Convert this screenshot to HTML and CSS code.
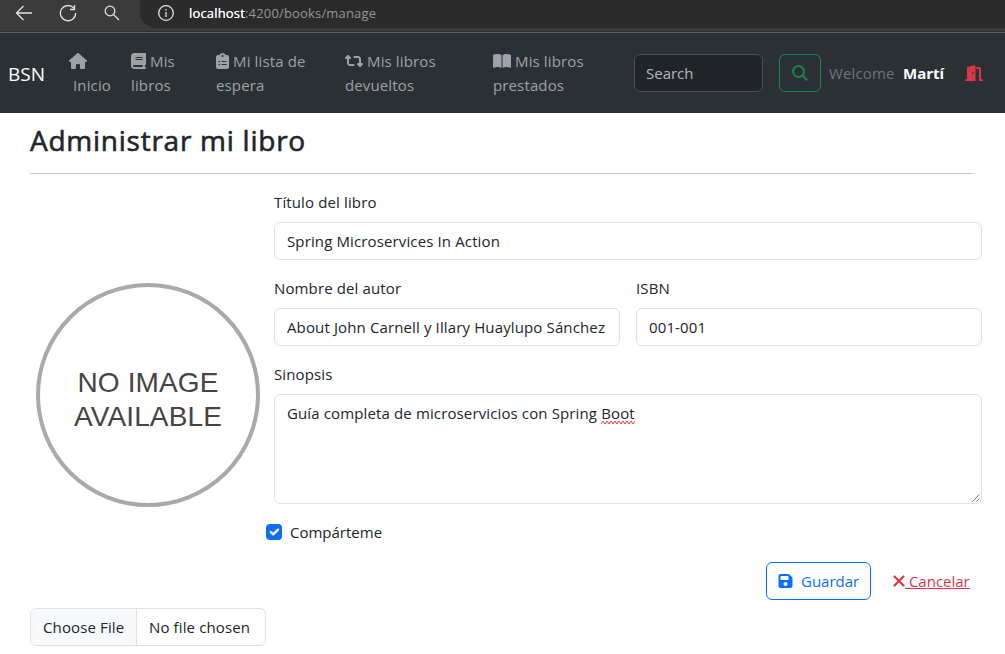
FILE: index.html
```html
<!DOCTYPE html>
<html lang="es">
<head>
<meta charset="utf-8">
<title>BSN</title>
<link rel="stylesheet" href="styles.css">
</head>
<body>
<div class="browser">
  <svg class="back" width="18" height="16" viewBox="0 0 18 16"><path d="M17 8H1.5M8.5 1L1.5 8l7 7"/></svg>
  <svg class="reload" width="18" height="18" viewBox="0 0 18 18"><path d="M14.8 4.2A7.6 7.6 0 1 0 16.6 9M15.5 1v4.5H11"/></svg>
  <svg class="find" width="16" height="16" viewBox="0 0 16 16"><circle cx="6" cy="6" r="4.8"/><path d="M9.6 9.6L15 15"/></svg>
  <div class="address">
    <svg class="info" width="16" height="16" viewBox="0 0 16 16"><circle cx="8" cy="8" r="7.3"/><path d="M8 7v5M8 4v1.4"/></svg>
    <span class="url"><span class="host">localhost</span>:4200/books/manage</span>
  </div>
</div>
<nav class="navbar">
  <a class="brand">BSN</a>
  <a class="link home"><svg class="fa" width="18" height="16" viewBox="0 0 576 512"><path d="M575.8 255.5c0 18-15 32.1-32 32.1h-32l.7 160.2c0 2.7-.2 5.4-.5 8.1V472c0 22.100-17.900 40-40 40H392c-22.100 0-40-17.900-40-40v-88c0-17.700-14.300-32-32-32h-64c-17.700 0-32 14.300-32 32v88c0 22.100-17.900 40-40 40h-80c-22.100 0-40-17.900-40-40V287.600H32c-18 0-32-14-32-32.100 0-9 3-17 10-24L266.400 8c7-7 15-8 22-8s15 2 21 7l255.400 224.500c8 7 12 15 11 24z"/></svg><br><span class="inicio">Inicio</span></a>
  <a class="link books"><svg class="fa" width="15" height="16" viewBox="0 0 448 512" preserveAspectRatio="none"><path d="M96 0C43 0 0 43 0 96v320c0 53 43 96 96 96h320c17.700 0 32-14.300 32-32s-14.300-32-32-32v-64c17.700 0 32-14.300 32-32V32c0-17.700-14.300-32-32-32H96zm0 384h256v64H96c-17.700 0-32-14.300-32-32s14.300-32 32-32zm32-240c0-8.800 7.200-16 16-16h192c8.800 0 16 7.200 16 16s-7.200 16-16 16H144c-8.800 0-16-7.200-16-16zm16 48h192c8.800 0 16 7.200 16 16s-7.200 16-16 16H144c-8.800 0-16-7.200-16-16s7.200-16 16-16z"/></svg> Mis<br>libros</a>
  <a class="link waiting"><svg class="fa" width="13" height="16" viewBox="0 0 384 512" preserveAspectRatio="none"><path d="M192 0c-41.800 0-77.400 26.700-90.500 64H64C28.700 64 0 92.700 0 128v320c0 35.300 28.700 64 64 64h256c35.300 0 64-28.700 64-64V128c0-35.300-28.700-64-64-64h-37.500C269.400 26.700 233.800 0 192 0zm0 64a32 32 0 1 1 0 64 32 32 0 1 1 0-64zM72 272a24 24 0 1 1 48 0 24 24 0 1 1-48 0zm104-16h128c8.800 0 16 7.200 16 16s-7.200 16-16 16H176c-8.800 0-16-7.200-16-16s7.200-16 16-16zM72 368a24 24 0 1 1 48 0 24 24 0 1 1-48 0zm88 0c0-8.800 7.200-16 16-16h128c8.800 0 16 7.200 16 16s-7.200 16-16 16H176c-8.800 0-16-7.200-16-16z"/></svg> Mi lista de<br>espera</a>
  <a class="link returned"><svg class="fa" width="18" height="16" viewBox="0 0 576 512"><path d="M272 416c17.700 0 32-14.300 32-32s-14.300-32-32-32H160c-17.700 0-32-14.300-32-32V192h32c12.900 0 24.600-7.800 29.600-19.800s2.200-25.700-6.900-34.900l-64-64c-12.500-12.500-32.800-12.500-45.300 0l-64 64c-9.200 9.200-11.900 22.900-6.900 34.900S19.100 192 32 192h32v128c0 53 43 96 96 96h112zM304 96c-17.700 0-32 14.300-32 32s14.300 32 32 32h112c17.700 0 32 14.300 32 32v128h-32c-12.900 0-24.600 7.800-29.600 19.800s-2.200 25.700 6.900 34.900l64 64c12.500 12.500 32.800 12.500 45.300 0l64-64c9.200-9.200 11.900-22.900 6.900-34.900S556.900 320 544 320h-32V192c0-53-43-96-96-96H304z"/></svg> Mis libros<br>devueltos</a>
  <a class="link lent"><svg class="fa" width="18" height="16" viewBox="0 0 576 512"><path d="M249.600 471.500c10.800 3.800 22.400-4.100 22.400-15.500V78.600c0-4.200-1.600-8.400-5-11C247.400 52 202.400 32 144 32 93.500 32 46.300 45.300 18.100 56.100 6.800 60.500 0 71.700 0 83.800v370.300c0 11.900 12.800 20.200 24.100 16.500C55.600 460.100 105.500 448 144 448c33.900 0 79 14 105.600 23.500zm76.800 0C353 462 398.100 448 432 448c38.500 0 88.400 12.100 119.900 22.600 11.300 3.800 24.100-4.600 24.100-16.500V83.800c0-12.100-6.800-23.300-18.100-27.600C529.700 45.300 482.500 32 432 32c-58.400 0-103.400 20-123 35.600-3.300 2.600-5 6.800-5 11V456c0 11.400 11.700 19.300 22.400 15.500z"/></svg> Mis libros<br>prestados</a>
  <div class="search">Search</div>
  <div class="go"><svg width="16" height="16" viewBox="0 0 16 16"><circle cx="6.500" cy="6.500" r="5.500"/><path d="M10.500 10.500L15.300 15.300"/></svg></div>
  <span class="welcome">Welcome</span>
  <span class="user">Martí</span>
  <svg class="door" width="18" height="16" viewBox="0 0 18 16"><path d="M2 2.200L9.200.2Q10.500 0 10.500 1.200V16H.8Q0 16 0 15.200T.8 14.300H2zM7.700 7a.7 1 0 1 0 0 2 .7 1 0 1 0 0-2zM11.200 2h3q1.800 0 1.800 1.800v10.500h1.200q.8 0 .8.900t-.8.800H14V4h-2.800z"/></svg>
</nav>
<main class="page">
  <h1 class="title">Administrar mi libro</h1>
  <div class="content">
    <div class="picture"><div class="circle"><span>NO IMAGE</span><span>AVAILABLE</span></div></div>
    <form class="form">
      <label class="label">Título del libro</label>
      <div class="field">Spring Microservices In Action</div>
      <div class="row">
        <div class="col"><label class="label">Nombre del autor</label><div class="field">About John Carnell y Illary Huaylupo Sánchez</div></div>
        <div class="col"><label class="label">ISBN</label><div class="field">001-001</div></div>
      </div>
      <label class="label">Sinopsis</label>
      <div class="field area">Guía completa de microservicios con Spring <span class="typo">Boot<svg class="wave" width="34" height="5" viewBox="0 0 34 5"><path d="M0 4l2-3 2 3 2-3 2 3 2-3 2 3 2-3 2 3 2-3 2 3 2-3 2 3 2-3 2 3 2-3 2 3 2-3"/></svg></span><svg class="grip" width="8" height="8" viewBox="0 0 8 8"><path d="M.5 7.500l7-7M4.500 7.500l3-3"/></svg></div>
      <div class="check"><span class="box"><svg width="16" height="16" viewBox="0 0 20 20"><path d="M6 10l3 3 6-6"/></svg></span><span class="plain">Compárteme</span></div>
      <div class="actions">
        <a class="save"><svg width="15" height="16" viewBox="0 0 448 512"><path d="M64 32C28.700 32 0 60.700 0 96v320c0 35.300 28.700 64 64 64h320c35.300 0 64-28.700 64-64V173.300c0-17-6.700-33.300-18.700-45.300L352 50.700c-12-12-28.300-18.700-45.300-18.700H64zm0 96c0-17.700 14.300-32 32-32h192c17.700 0 32 14.300 32 32v64c0 17.700-14.300 32-32 32H96c-17.700 0-32-14.300-32-32v-64zm160 160a64 64 0 1 1 0 128 64 64 0 1 1 0-128z"/></svg><span class="plain">Guardar</span></a>
        <a class="cancel"><svg width="12" height="12" viewBox="0 0 12 12"><path d="M1.500 1.500l9 9m0-9l-9 9"/></svg><span class="plain">&nbsp;Cancelar</span></a>
      </div>
    </form>
  </div>
  <div class="file"><span class="choose">Choose File</span><span class="chosen">No file chosen</span></div>
</main>
</body>
</html>
```
FILE: styles.css
```css
* { box-sizing: border-box; }
body { margin: 0; width: 1005px; height: 654px; overflow: hidden; background: #fff; color: #212529; font: 15px/24px "Open Sans", "Noto Sans", sans-serif; letter-spacing: .13px; white-space: nowrap; }
svg { display: block; flex: none; }
.plain { letter-spacing: 0; }

.browser { display: flex; align-items: flex-start; height: 33px; background: #3b3b3b; border-bottom: 1px solid #606060; box-shadow: inset 0 -1px #303030; overflow: hidden; }
.browser svg { fill: none; stroke: #e4e4e4; stroke-width: 1.3; }
.back { margin: 5px 0 0 15px; }
.reload { margin: 4px 0 0 26px; }
.find { margin: 5px 0 0 27px; }
.address { display: flex; flex: 1; height: 28px; margin-left: 20px; padding-left: 18px; background: #2b2b2b; border-radius: 0 0 0 16px; }
.info { margin-top: 5px; }
.url { margin-left: 15px; font-size: 13px; line-height: 26px; letter-spacing: .17px; color: #969696; }
.host { color: #fff; text-shadow: 0 0 .5px #fff; }

.navbar { display: flex; align-items: center; height: 80px; padding-left: 8px; background: #2b3035; color: #9fa2a4; }
.brand { width: 61px; padding-top: 1px; color: #fff; font-size: 19px; letter-spacing: 0; }
.link .fa { display: inline-block; vertical-align: -2px; fill: #9fa2a4; }
.home { width: 62px; }
.inicio { padding-left: 4px; }
.books { width: 85px; }
.waiting { width: 129px; }
.returned { width: 148px; }
.lent { width: 141px; }
.search { width: 129px; height: 38px; padding: 6px 11px; background: #212529; border: 1px solid #495057; border-radius: 6px; color: #b4b7ba; letter-spacing: 0; }
.go { display: flex; align-items: center; justify-content: center; width: 42px; height: 38px; margin: 0 8px 0 16px; border: 1px solid #198754; border-radius: 6px; }
.go svg { fill: none; stroke: #198754; stroke-width: 1.9; }
.welcome { width: 74px; color: #6c757d; }
.user { width: 62px; color: #fff; font-weight: 700; letter-spacing: 0; }
.door { fill: #dc3545; fill-rule: evenodd; }

.page { padding: 9px 23px 0 30px; }
.title { width: 944px; height: 52px; margin: 0; border-bottom: 1px solid #c8c9ca; font-size: 28px; line-height: 36px; font-weight: 500; letter-spacing: .75px; -webkit-text-stroke: .6px #212529; }
.content { display: flex; }
.picture { display: flex; width: 244px; padding: 109px 0 0 6px; }
.circle { display: flex; flex-direction: column; align-items: center; justify-content: center; width: 224px; height: 224px; padding-top: 9px; border: 4px solid #a9a9a9; border-radius: 50%; color: #444; font: 28px/34px "Liberation Sans", sans-serif; }
.form { flex: 1; padding-top: 16px; }
.label { display: block; height: 32px; line-height: 25px; }
.field { height: 38px; margin-bottom: 16px; padding: 6px 12px; border: 1px solid #dee2e6; border-radius: 6px; }
.row { display: flex; gap: 16px; }
.col { flex: 1; min-width: 0; }
.area { position: relative; height: 110px; }
.typo { position: relative; }
.wave { position: absolute; left: 0; bottom: -2px; fill: none; stroke: #f33; }
.grip { position: absolute; right: 1px; bottom: 1px; fill: none; stroke: #555; stroke-width: .8; }
.check { display: flex; align-items: center; height: 24px; margin-left: -8px; gap: 8px; }
.box { width: 16px; height: 16px; background: #0d6efd; border-radius: 4px; }
.box svg { fill: none; stroke: #fff; stroke-width: 3; stroke-linecap: round; stroke-linejoin: round; }
.actions { display: flex; margin: 18px 0 0 492px; }
.save { display: flex; align-items: center; width: 105px; height: 38px; padding-left: 11px; gap: 8px; border: 1px solid #0d6efd; border-radius: 6px; color: #0d6efd; }
.save svg { fill: #0d6efd; fill-rule: evenodd; }
.cancel { display: flex; align-items: center; margin-left: 22px; color: #dc3545; text-decoration: underline; }
.cancel svg { fill: none; stroke: #dc3545; stroke-width: 2.2; stroke-linecap: round; }
.file { display: flex; width: 236px; height: 38px; margin-top: 8px; border: 1px solid #dee2e6; border-radius: 6px; line-height: 36px; overflow: hidden; }
.choose { width: 106px; padding-left: 12px; background: #f8f9fa; border-right: 1px solid #dee2e6; }
.chosen { padding-left: 12px; }
```
